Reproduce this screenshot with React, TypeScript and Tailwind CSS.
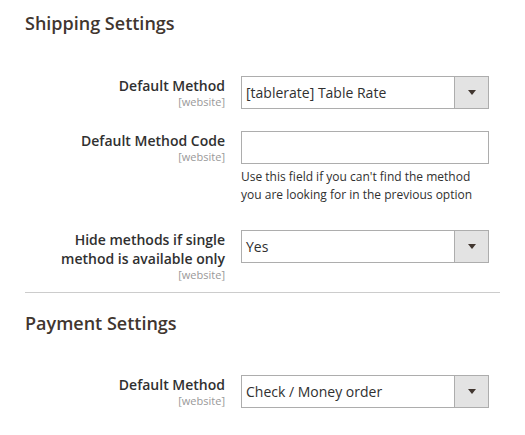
import { ReactNode } from "react";

const SelectBox = ({ value }: { value: string }) => {
  return (
    <div className="flex h-[33px] w-[248px] border border-[#adadad] bg-white">
      <div className="flex flex-1 items-center pl-[4px] text-[14px] text-[#303030]">{value}</div>
      <div className="flex w-[34px] items-center justify-center border-l border-[#adadad] bg-[#e3e3e3]">
        <svg width="8" height="5" viewBox="0 0 8 5">
          <path d="M0 0 L8 0 L4 5 Z" fill="#41362f" />
        </svg>
      </div>
    </div>
  );
};

interface FieldRowProps {
  label: ReactNode;
  children: ReactNode;
  className?: string;
}

const FieldRow = ({ label, children, className }: FieldRowProps) => {
  return (
    <div className={"flex items-start " + (className ?? "")}>
      <div className="flex w-[200px] flex-col items-end text-right">
        <span className="text-[14px] font-semibold leading-[19px] text-[#303030]">{label}</span>
        <span className="text-[11px] leading-[14px] text-[#999999]">[website]</span>
      </div>
      <div className="ml-[16px] flex flex-col">{children}</div>
    </div>
  );
};

export default function App() {
  return (
    <div
      className="h-[435px] w-[525px] bg-white px-[25px]"
      style={{ fontFamily: '"Open Sans", "Liberation Sans", sans-serif' }}
    >
      <h2 className="pt-[11px] text-[18px] font-semibold leading-[24px] text-[#41362f]">Shipping Settings</h2>

      <FieldRow label="Default Method" className="mt-[41px]">
        <SelectBox value="[tablerate] Table Rate" />
      </FieldRow>

      <FieldRow label="Default Method Code" className="mt-[22px]">
        <div className="h-[33px] w-[248px] border border-[#adadad] bg-white" />
        <p className="mt-[4px] text-[12px] leading-[18px] text-[#303030]">
          Use this field if you can't find the method
          <br />
          you are looking for in the previous option
        </p>
      </FieldRow>

      <FieldRow
        label={
          <>
            Hide methods if single
            <br />
            method is available only
          </>
        }
        className="mt-[26px]"
      >
        <SelectBox value="Yes" />
      </FieldRow>

      <div className="mt-[10px] border-t border-[#cccccc]" />

      <h2 className="mt-[18px] text-[18px] font-semibold leading-[24px] text-[#41362f]">Payment Settings</h2>

      <FieldRow label="Default Method" className="mt-[40px]">
        <SelectBox value="Check / Money order" />
      </FieldRow>
    </div>
  );
}
